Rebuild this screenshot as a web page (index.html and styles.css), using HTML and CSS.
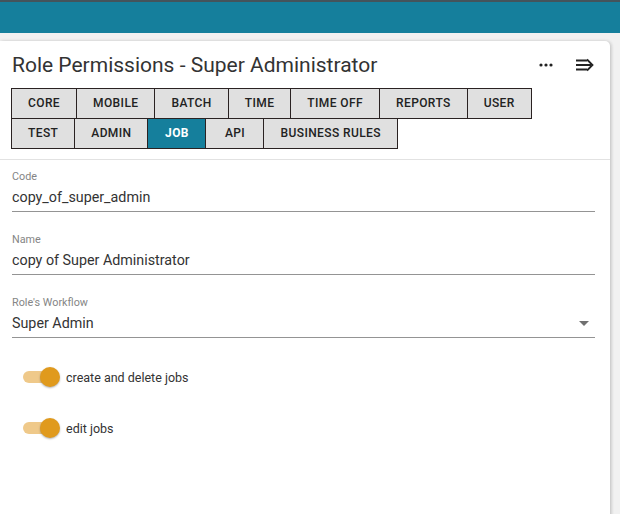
FILE: index.html
```html
<!DOCTYPE html>
<html>
<head>
<meta charset="utf-8">
<link rel="stylesheet" href="styles.css">
</head>
<body>
<div class="topbar"></div>
<div class="card">
  <div class="card-header">
    <h1 class="title">Role Permissions - Super Administrator</h1>
    <div class="actions">
      <svg class="icon-dots" width="14" height="4" viewBox="0 0 14 4"><circle cx="2" cy="2" r="1.6"/><circle cx="7" cy="2" r="1.6"/><circle cx="12" cy="2" r="1.6"/></svg>
      <svg class="icon-collapse" width="19" height="14" viewBox="0 0 19 14"><path d="M1 2.5h11M1 7h15M1 11.5h11M12 1.5l5.5 5.5-5.5 5.5" fill="none" stroke="#222" stroke-width="1.8"/></svg>
    </div>
  </div>
  <div class="tabs">
    <div class="tab-row">
      <div class="tab">CORE</div>
      <div class="tab">MOBILE</div>
      <div class="tab">BATCH</div>
      <div class="tab">TIME</div>
      <div class="tab">TIME OFF</div>
      <div class="tab">REPORTS</div>
      <div class="tab">USER</div>
    </div>
    <div class="tab-row">
      <div class="tab">TEST</div>
      <div class="tab">ADMIN</div>
      <div class="tab active">JOB</div>
      <div class="tab">API</div>
      <div class="tab">BUSINESS RULES</div>
    </div>
  </div>
  <div class="divider"></div>
  <div class="form">
    <div class="field">
      <div class="label">Code</div>
      <div class="value">copy_of_super_admin</div>
    </div>
    <div class="field">
      <div class="label">Name</div>
      <div class="value">copy of Super Administrator</div>
    </div>
    <div class="field">
      <div class="label">Role's Workflow</div>
      <div class="value select"><span>Super Admin</span><span class="caret"></span></div>
    </div>
    <div class="toggles">
      <div class="toggle-row">
        <div class="switch"><span class="track"></span><span class="knob"></span></div>
        <span class="toggle-label">create and delete jobs</span>
      </div>
      <div class="toggle-row">
        <div class="switch"><span class="track"></span><span class="knob"></span></div>
        <span class="toggle-label">edit jobs</span>
      </div>
    </div>
  </div>
</div>
</body>
</html>
```
FILE: styles.css
```css
html, body {
  margin: 0;
  padding: 0;
  height: 100%;
}
body {
  background: #f1f1f1;
  font-family: Roboto, "Liberation Sans", sans-serif;
  color: #333;
  overflow: hidden;
}
.topbar {
  height: 31px;
  border-top: 2px solid #44545b;
  background: #157f9c;
}
.card {
  margin: 8px 10px 0 0;
  background: #fff;
  border-radius: 0 5px 0 0;
  box-shadow: 0 1px 4px rgba(0,0,0,0.18), 2px 0 3px rgba(0,0,0,0.08);
  height: 480px;
}
.card-header {
  display: flex;
  justify-content: space-between;
  align-items: center;
  padding: 11px 16px 0 12px;
}
.title {
  margin: 0;
  font-size: 21px;
  font-weight: 400;
  line-height: 26px;
  color: #333;
}
.actions {
  display: flex;
  align-items: center;
  gap: 22px;
}
.icon-dots { fill: #222; }
.tabs {
  padding: 10px 0 0 11px;
}
.tab-row {
  display: flex;
}
.tab-row + .tab-row { margin-top: -1px; }
.tab {
  border: 1px solid #2a2222;
  background: #e0e0e0;
  height: 29px;
  line-height: 29px;
  padding: 0 16px;
  min-width: 25px;
  text-align: center;
  font-size: 12px;
  font-weight: 500;
  letter-spacing: 0.4px;
  color: #222;
}
.tab + .tab { margin-left: -1px; }
.tab.active {
  background: #157f9c;
  color: #fff;
  font-weight: 700;
}
.divider {
  height: 1px;
  background: #e2e2e2;
  margin-top: 10px;
}
.form {
  padding: 10px 15px 0 12px;
}
.field {
  margin-bottom: 21px;
}
.label {
  font-size: 10.8px;
  line-height: 13px;
  color: #858585;
  margin-bottom: 4px;
}
.value {
  font-size: 14.3px;
  line-height: 20px;
  padding-bottom: 4px;
  border-bottom: 1px solid #949494;
  color: #333;
}
.select {
  display: flex;
  justify-content: space-between;
  align-items: center;
}
.caret {
  width: 0;
  height: 0;
  border-left: 5px solid transparent;
  border-right: 5px solid transparent;
  border-top: 5px solid #707070;
  margin-right: 6px;
}
.toggles {
  padding-top: 8px;
  padding-left: 10px;
}
.toggle-row {
  display: flex;
  align-items: center;
  height: 20px;
  margin-bottom: 31px;
}
.switch {
  position: relative;
  width: 38px;
  height: 20px;
}
.track {
  position: absolute;
  left: 1px;
  top: 4px;
  width: 30px;
  height: 12px;
  border-radius: 6px;
  background: #efc98a;
}
.knob {
  position: absolute;
  right: 0;
  top: 0;
  width: 20px;
  height: 20px;
  border-radius: 50%;
  background: #e09a1d;
  box-shadow: 0 1px 2px rgba(0,0,0,0.3);
}
.toggle-label {
  margin-left: 6px;
  font-size: 12.5px;
  color: #333;
}
```
